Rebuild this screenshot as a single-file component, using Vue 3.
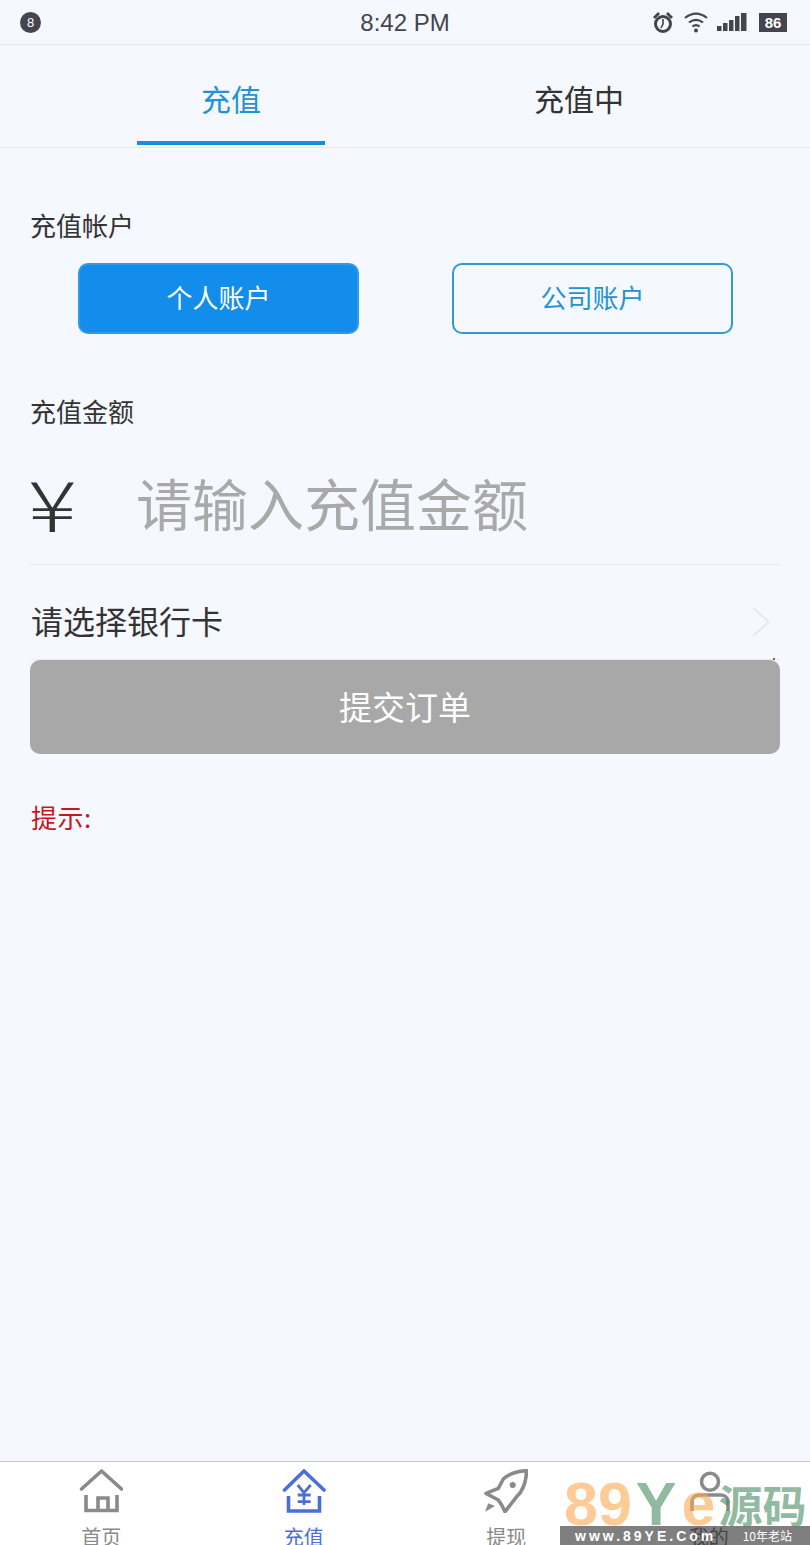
<template>
  <div class="page">
    <div class="status-bar">
      <div class="status-left"><span class="notice-dot">8</span></div>
      <div class="status-time">8:42 PM</div>
      <div class="status-right">
        <svg width="24" height="24" viewBox="0 0 24 24" class="st-icon">
          <circle cx="12" cy="14" r="7.500" fill="none" stroke="#45454d" stroke-width="3" />
          <path d="M12 9v5l-2 4" fill="none" stroke="#45454d" stroke-width="1.600" />
          <path d="M2 7l5-5 2 2-5 5zM22 7l-5-5-2 2 5 5z" fill="#45454d" />
        </svg>
        <svg width="26" height="22" viewBox="0 0 26 22" class="st-icon">
          <path d="M2 7c7-5.500 15-5.500 22 0M6 11.500c4.500-3.500 9.500-3.500 14 0M9.500 15.500c2-1.500 5-1.500 7 0" fill="none" stroke="#45454d" stroke-width="2.200" />
          <circle cx="13" cy="19.500" r="2" fill="#45454d" />
        </svg>
        <svg width="30" height="20" viewBox="0 0 30 20" class="st-icon signal">
          <rect x="0" y="14" width="4.500" height="5" fill="#45454d" />
          <rect x="6" y="11" width="4.500" height="8" fill="#45454d" />
          <rect x="12" y="8" width="4.500" height="11" fill="#45454d" />
          <rect x="18" y="4" width="4.500" height="15" fill="#45454d" />
          <rect x="24" y="1" width="5.500" height="18" fill="#45454d" />
        </svg>
        <span class="battery">86</span>
      </div>
    </div>

    <div class="tabs">
      <div class="tab active"><span>充值</span></div>
      <div class="tab"><span>充值中</span></div>
    </div>

    <div class="content">
      <div class="label first">充值帐户</div>
      <div class="account-row">
        <button class="account-btn selected">个人账户</button>
        <button class="account-btn">公司账户</button>
      </div>

      <div class="label second">充值金额</div>
      <div class="amount-row">
        <span class="yen">¥</span>
        <span class="placeholder">请输入充值金额</span>
      </div>

      <div class="bank-row">
        <span>请选择银行卡</span>
        <svg width="20" height="30" viewBox="0 0 20 30">
          <path d="M2 1l16 14L2 29" fill="none" stroke="#e6e9ee" stroke-width="2" />
        </svg>
        <i class="red-dot"></i>
      </div>

      <button class="submit">提交订单</button>
      <div class="hint">提示:</div>
    </div>

    <div class="tabbar">
      <div v-for="item in navItems" :key="item.label" class="nav-item" :class="{ on: item.on }">
        <svg width="44" height="44" viewBox="0 0 44 44" fill="none" :stroke="item.on ? '#4a6fd8' : '#8a8a8a'" stroke-width="3.600">
          <template v-if="item.icon === 'home'">
            <path d="M2.500 20L22.500 2l20 18" stroke-linecap="round" stroke-linejoin="round" />
            <path d="M7 26v15.500h31V26M19 41V29h10v12" />
          </template>
          <template v-else-if="item.icon === 'money'">
            <path d="M2.500 21L22 2l20 19" stroke-linecap="round" stroke-linejoin="round" />
            <path d="M6.500 27v15h31V27" />
            <path d="M15.700 16l6.300 7.700 6.700-7.700M15.700 26h13M15.700 32.700h13M22 23v13" stroke-width="2.800" />
          </template>
          <template v-else-if="item.icon === 'rocket'">
            <path d="M42.700 1.700C33 2 24 6 19.300 10L14.300 19.300 2 24.300 14.300 31 17.700 36 21 42.700 32.700 27.700C38 23 42 14 42.700 1.700z" stroke-linejoin="round" />
            <circle cx="28.700" cy="16" r="3" fill="#8a8a8a" stroke="none" />
            <path d="M1 42.700L4.300 34.300 11 37z" fill="#8a8a8a" stroke="none" />
          </template>
          <template v-else>
            <circle cx="23" cy="12.700" r="8.500" stroke-width="3.600" />
            <path d="M5 42V33c0-4 3-7 7-7h22c4 0 7 3 7 7v9" />
          </template>
        </svg>
        <span>{{ item.label }}</span>
      </div>
    </div>

    <div class="watermark">
      <div class="wm-logo">
        <span class="wm-num">89</span><span class="wm-y">Y</span><span class="wm-e">e</span><span class="wm-cn">源码</span>
      </div>
      <div class="wm-strip">
        <span class="wm-url">www.89YE.Com</span>
        <span class="wm-tag">10年老站</span>
      </div>
    </div>
  </div>
</template>

<script setup>
const navItems = [
  { label: '首页', icon: 'home', on: false },
  { label: '充值', icon: 'money', on: true },
  { label: '提现', icon: 'rocket', on: false },
  { label: '我的', icon: 'user', on: false }
]
</script>

<style>
html,
body {
  margin: 0;
  background: #f5f8fe;
}
</style>

<style scoped>
.page {
  position: relative;
  width: 810px;
  height: 1545px;
  overflow: hidden;
  display: flex;
  flex-direction: column;
  background: #f5f8fe;
  color: #333;
  font-family: "Noto Sans CJK SC", "Liberation Sans", sans-serif;
}

.status-bar {
  height: 44px;
  flex-shrink: 0;
  display: grid;
  grid-template-columns: 1fr auto 1fr;
  align-items: center;
  padding: 0 23px 0 20px;
  border-bottom: 1px solid #e3e5ea;
  color: #45454d;
}

.notice-dot {
  display: flex;
  align-items: center;
  justify-content: center;
  width: 21px;
  height: 21px;
  border-radius: 50%;
  background: #45454d;
  color: #fff;
  font-size: 13px;
  font-family: "Liberation Sans", sans-serif;
}

.status-time {
  font-family: "Liberation Sans", sans-serif;
  font-size: 24px;
  padding: 2px 0 0 3px;
}

.status-right {
  display: flex;
  align-items: center;
  justify-content: flex-end;
  gap: 8px;
}

.st-icon {
  display: block;
}

.signal {
  margin-right: 2px;
}

.battery {
  width: 28px;
  height: 19px;
  line-height: 19px;
  text-align: center;
  background: #45454d;
  color: #fff;
  font-size: 15px;
  font-weight: 700;
  font-family: "Liberation Sans", sans-serif;
  border-left: 2px solid #f5f8fe;
}

.tabs {
  height: 102px;
  flex-shrink: 0;
  display: flex;
  padding: 0 137px;
  gap: 160px;
  border-bottom: 1px solid #ebe6ef;
}

.tab {
  width: 188px;
  height: 100px;
  box-sizing: border-box;
  display: flex;
  align-items: center;
  justify-content: center;
  padding-top: 10px;
  border-bottom: 4px solid transparent;
  font-size: 30px;
  color: #333;
}

.tab.active {
  color: #1f93d8;
  border-bottom-color: #1a8cd8;
}

.content {
  flex: 1;
  padding: 0 30px;
}

.label {
  font-size: 26px;
  line-height: 36px;
  color: #333;
}

.label.first {
  margin-top: 59px;
}

.label.second {
  margin-top: 59px;
}

.account-row {
  display: flex;
  justify-content: space-between;
  margin: 20px 47px 0 48px;
}

.account-btn {
  width: 281px;
  height: 71px;
  box-sizing: border-box;
  border: 2px solid #2e9ad6;
  border-radius: 10px;
  background: transparent;
  color: #2193d3;
  font-size: 26px;
  font-family: inherit;
  padding: 0 0 4px;
}

.account-btn.selected {
  background: #138deb;
  border-color: #2f9be8;
  color: #fff;
}

.amount-row {
  height: 136px;
  box-sizing: border-box;
  display: flex;
  align-items: center;
  padding-top: 10px;
  border-bottom: 1px solid #e6e8ee;
}

.yen {
  width: 108px;
  margin-left: -2px;
  font-size: 70px;
  font-weight: 300;
  line-height: 1;
  color: #333;
  transform: scaleX(1.3);
  transform-origin: left center;
}

.placeholder {
  font-size: 56px;
  color: #a9a9a9;
}

.bank-row {
  position: relative;
  height: 95px;
  box-sizing: border-box;
  display: flex;
  align-items: center;
  justify-content: space-between;
  padding: 16px 9px 0 1px;
  font-size: 32px;
  color: #333;
  border-bottom: 1px solid #e9ebef;
}

.bank-row svg {
  margin-top: 4px;
}

.red-dot {
  position: absolute;
  right: 5px;
  bottom: -1px;
  width: 2px;
  height: 2px;
  background: #e0403a;
}

.submit {
  display: block;
  width: 100%;
  height: 94px;
  border: 0;
  border-radius: 10px;
  background: #a8a8a8;
  color: #fff;
  font-size: 33px;
  font-family: inherit;
  padding: 0 0 2px;
}

.hint {
  margin-top: 43px;
  padding-left: 1px;
  font-size: 26px;
  line-height: 40px;
  letter-spacing: 0.5px;
  color: #c8161d;
}

.tabbar {
  height: 84px;
  flex-shrink: 0;
  display: grid;
  grid-template-columns: repeat(4, 1fr);
  box-sizing: border-box;
  border-top: 1px solid #c9c9c9;
  background: #fff;
  overflow: hidden;
}

.nav-item {
  display: flex;
  flex-direction: column;
  align-items: center;
  padding-top: 7px;
  font-size: 20px;
  line-height: 28px;
  color: #8a8a8a;
}

.nav-item svg {
  flex-shrink: 0;
  margin-bottom: 10px;
}

.nav-item.on {
  color: #4a6fd8;
}

.watermark {
  position: absolute;
  right: 0;
  bottom: 0;
  width: 250px;
}

.wm-logo {
  height: 44px;
  display: flex;
  align-items: center;
  padding-left: 4px;
  font-family: "Liberation Sans", sans-serif;
  font-weight: 700;
  font-size: 61px;
  line-height: 44px;
  white-space: nowrap;
}

.wm-num,
.wm-e {
  color: rgba(251, 170, 80, 0.6);
}

.wm-y {
  margin-left: 4px;
  color: rgba(70, 140, 95, 0.6);
}

.wm-e {
  margin-left: 5px;
}

.wm-cn {
  margin-left: 3px;
  color: rgba(70, 140, 95, 0.6);
  font-family: "Noto Sans CJK SC", sans-serif;
  font-size: 44px;
}

.wm-strip {
  height: 19px;
  display: flex;
  align-items: center;
  justify-content: space-between;
  padding: 0 18px 0 15px;
  background: rgba(0, 0, 0, 0.5);
  color: #fff;
}

.wm-url {
  font-family: "Liberation Sans", sans-serif;
  font-size: 14px;
  font-weight: 700;
  letter-spacing: 3px;
}

.wm-tag {
  font-size: 12px;
}
</style>
